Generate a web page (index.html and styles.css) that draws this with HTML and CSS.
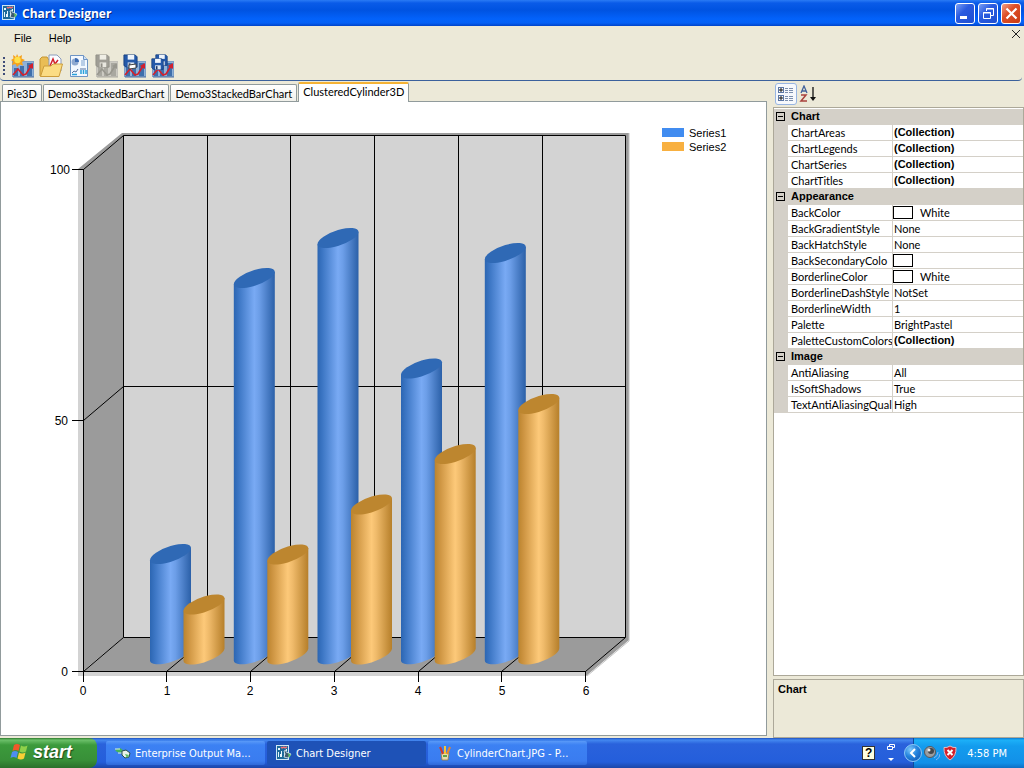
FILE: index.html
```html
<!DOCTYPE html>
<html lang="en">
<head>
    <meta charset="UTF-8">
    <meta name="viewport" content="width=device-width, initial-scale=1.0">
    <title>Chart Designer</title>
    <link rel="stylesheet" href="styles.css">
</head>
<body>
    <!-- shared icon shapes -->
    <svg class="defs" width="0" height="0" aria-hidden="true">
        <defs>
            <symbol id="app" viewBox="0 0 16 16">
                <rect x="0.5" y="0.5" width="12" height="14" fill="#1d6a9a" stroke="#cfe6f5"/>
                <path d="M2 3h2v2H2zM2 7h1v5H2zM5 6h1v6H5zM8 8h1v4H8zM4 9h1v3H4zM10 4h1v2h-1z" fill="#e8f6ff"/>
                <path d="M5 2l1 1 2-1 1 1 2-1" fill="none" stroke="#f07078" stroke-width="1.4"/>
                <path d="M8 6l2-1v2l5 2-3 4-4-1 1-3z" fill="#3c5a70" stroke="#dfeef5" stroke-width="0.8"/>
                <path d="M12 8l3 2-2 3" fill="#5ec46a"/>
            </symbol>
            <symbol id="chart" viewBox="0 0 24 24">
                <rect x="1.5" y="7.5" width="21" height="15" fill="#8fb1d8" stroke="#7d9fc8"/>
                <path d="M3 22V14h4v8zM9 22V12h4v10zM16 22V9h5v13z" fill="#3f6fab"/>
                <path d="M2 23h21" stroke="#4a6fa3"/>
                <path d="M2 21l5-6 5 6 3-1 5-8" fill="none" stroke="#d3202c" stroke-width="1.6"/>
                <path d="M17 12l5-3 0 6z" fill="#d3202c"/>
            </symbol>
            <symbol id="disk" viewBox="0 0 16 16">
                <path d="M1 1h12l2 2v11H3l-2-2z" fill="#2459a9" stroke="#17407f"/>
                <path d="M5 1h7v5H5z" fill="#eef4fb"/>
                <path d="M5 9h7v5H5z" fill="#dfe7f0"/>
                <path d="M6 10h2v4H6z" fill="#1b3766"/>
            </symbol>
            <linearGradient id="blue">
                <stop offset="0" stop-color="#2c66b2"/>
                <stop offset="0.12" stop-color="#3c76c4"/>
                <stop offset="0.5" stop-color="#79aaf4"/>
                <stop offset="0.62" stop-color="#6c9ee8"/>
                <stop offset="1" stop-color="#2b60a8"/>
            </linearGradient>
            <linearGradient id="gold">
                <stop offset="0" stop-color="#bb842e"/>
                <stop offset="0.12" stop-color="#cc9340"/>
                <stop offset="0.5" stop-color="#fdc979"/>
                <stop offset="0.62" stop-color="#efba6a"/>
                <stop offset="1" stop-color="#b67f2a"/>
            </linearGradient>
            <radialGradient id="bubble" cx="0.35" cy="0.3" r="0.8">
                <stop offset="0" stop-color="#7fc8fb"/>
                <stop offset="0.5" stop-color="#2484de"/>
                <stop offset="1" stop-color="#1259b5"/>
            </radialGradient>
        </defs>
    </svg>

    <header class="titlebar">
        <svg class="icon16"><use href="#app"/></svg>
        <h1>Chart Designer</h1>
        <button class="caption" aria-label="Minimize">
            <svg width="19" height="19"><rect x="4" y="12" width="7" height="3" fill="#fff"/></svg>
        </button>
        <button class="caption" aria-label="Restore">
            <svg width="19" height="19" fill="none" stroke="#fff"><path d="M7.5 7V4.500H14.500V11.500H12M7 5h8"/><path d="M4.500 8.500H11.500V14.500H4.500zM4 9h8"/></svg>
        </button>
        <button class="caption close" aria-label="Close">
            <svg width="19" height="19"><path d="M4.500 4.500l10 10M14.500 4.500l-10 10" stroke="#fff" stroke-width="2.200"/></svg>
        </button>
    </header>

    <nav class="menubar">
        <button>File</button>
        <button>Help</button>
        <button class="mdi-close" aria-label="Close document">
            <svg width="10" height="10"><path d="M1 1l8 8M9 1l-8 8" stroke="#222"/></svg>
        </button>
    </nav>

    <div class="toolbar">
        <span class="grip"></span>
        <button aria-label="New chart">
            <svg width="24" height="24" viewBox="0 0 24 24">
                <use href="#chart"/>
                <path d="M6 0l1.500 3L11 1l-.5 3.500L14 6l-3 2 1 3.500-3.500-1L6 13l-1.500-3L1 11l1-3.500L0 6l2.500-1.500L2 1l3 2z" fill="#f6a21c"/>
                <circle cx="6.500" cy="6" r="3.200" fill="#ffe14a"/>
            </svg>
        </button>
        <button aria-label="Open">
            <svg width="24" height="24" viewBox="0 0 24 24">
                <path d="M1 22V5l2-2h5l2 3h9v16z" fill="#e9bd55" stroke="#c59532"/>
                <path d="M10 1h8l4 4v12H10z" fill="#fbfcff" stroke="#8c9cbc"/>
                <path d="M11 12l3-7 2 5 3-4" fill="none" stroke="#d3202c" stroke-width="1.500"/>
                <path d="M1.500 22.500L5 12h7l2-2h9.500L20 22.500z" fill="#fbdc83" stroke="#cc9d3b"/>
            </svg>
        </button>
        <button aria-label="Page preview">
            <svg width="24" height="24" viewBox="0 0 24 24">
                <path d="M3.500 1.500h13l4 4v17h-17z" fill="#f3f8fe" stroke="#6d94c4"/>
                <path d="M16.500 1.500v4h4" fill="#cfe0f3" stroke="#6d94c4"/>
                <circle cx="8" cy="8" r="3.500" fill="#8ea9d0"/>
                <path d="M8 8V4a4 4 0 0 1 4 4z" fill="#3d6db4"/>
                <path d="M14 7h4M14 9h4M14 11h4" stroke="#7fa3cf"/>
                <path d="M5 19l2-2 2 1 2-3M13 15h6" fill="none" stroke="#54719f"/>
                <path d="M14 16v4M16.500 16v4M19 16v4M5 20.500h5" stroke="#29a1dc" stroke-width="1.500"/>
            </svg>
        </button>
        <button aria-label="Save" disabled>
            <svg class="grey" width="24" height="24" viewBox="0 0 24 24">
                <use href="#chart"/>
                <use href="#disk" width="15" height="15"/>
            </svg>
        </button>
        <button aria-label="Save as">
            <svg width="24" height="24" viewBox="0 0 24 24">
                <use href="#chart"/>
                <use href="#disk" width="15" height="15"/>
                <path d="M6 11l7-1v4l-7 1z" fill="#fff" stroke="#444"/>
            </svg>
        </button>
        <button aria-label="Save all">
            <svg width="24" height="24" viewBox="0 0 24 24">
                <use href="#chart"/>
                <use href="#disk" x="4" width="13" height="13"/>
                <use href="#disk" y="4" width="13" height="13"/>
            </svg>
        </button>
    </div>

    <main class="workspace">
        <section class="document">
            <div class="tabs" role="tablist">
                <button role="tab">Pie3D</button>
                <button role="tab">Demo3StackedBarChart</button>
                <button role="tab">Demo3StackedBarChart</button>
                <button role="tab" class="active" aria-selected="true">ClusteredCylinder3D</button>
            </div>
            <div class="canvas">
                <svg class="plot" width="740" height="620" viewBox="1 102 740 620" role="img" aria-label="Clustered cylinder chart">
                    <!-- walls -->
                    <path d="M78 169h6v502h502v5H78z" fill="#d3d3d3"/>
                    <path d="M78 169L122 133H629V640L586 676V671L625 637V136H124L84 170z" fill="#9b9b9b"/>
                    <path d="M629 133v508l-42 35" fill="none" stroke="#c4c4c4"/>
                    <path d="M123 135H626V638H123z" fill="#d3d3d3"/>
                    <path d="M83 169L123 135V638L83 671z" fill="#9b9b9b"/>
                    <path d="M123 638H626L586 671H83z" fill="#9b9b9b"/>
                    <!-- grid -->
                    <g class="grid">
                        <path d="M83.500 169.500L123.500 135.500H625.500V637.500H123.500V135.500"/>
                        <path d="M207.500 135V637M290.500 135V637M374.500 135V637M458.500 135V637M542.500 135V637"/>
                        <path d="M83.500 420.500L123.500 386.500H625.500"/>
                        <path d="M83.500 671.500L123.500 637.500M166.500 671.500L207.500 637.500M250.500 671.500L290.500 637.500M334.500 671.500L374.500 637.500M418.500 671.500L458.500 637.500M501.500 671.500L542.500 637.500M585.500 671.500L625.500 637.500"/>
                        <path d="M83.500 169V682M72 671.500H586M72 169.500H84M72 420.500H84"/>
                        <path d="M166.500 671V682M250.500 671V682M334.500 671V682M418.500 671V682M501.500 671V682M585.500 671V682"/>
                    </g>
                    <!-- cylinders, one pair per category -->
                    <g class="s1" transform="matrix(1 -.3 0 1 170.500 554)"><path d="M-20.500 0V100.300A20.500 7.900 0 0 0 20.500 100.300V0z"/><ellipse rx="20.500" ry="7.900"/></g>
                    <g class="s2" transform="matrix(1 -.3 0 1 204 604.500)"><path d="M-20.500 0V50A20.500 7.900 0 0 0 20.500 50V0z"/><ellipse rx="20.500" ry="7.900"/></g>
                    <g class="s1" transform="matrix(1 -.3 0 1 254.300 278)"><path d="M-20.500 0V376.300A20.500 7.900 0 0 0 20.500 376.300V0z"/><ellipse rx="20.500" ry="7.900"/></g>
                    <g class="s2" transform="matrix(1 -.3 0 1 287.800 554.500)"><path d="M-20.500 0V100A20.500 7.900 0 0 0 20.500 100V0z"/><ellipse rx="20.500" ry="7.900"/></g>
                    <g class="s1" transform="matrix(1 -.3 0 1 338 238)"><path d="M-20.500 0V416.300A20.500 7.900 0 0 0 20.500 416.300V0z"/><ellipse rx="20.500" ry="7.900"/></g>
                    <g class="s2" transform="matrix(1 -.3 0 1 371.500 504.500)"><path d="M-20.500 0V150A20.500 7.900 0 0 0 20.500 150V0z"/><ellipse rx="20.500" ry="7.900"/></g>
                    <g class="s1" transform="matrix(1 -.3 0 1 421.500 368.500)"><path d="M-20.500 0V285.800A20.500 7.900 0 0 0 20.500 285.800V0z"/><ellipse rx="20.500" ry="7.900"/></g>
                    <g class="s2" transform="matrix(1 -.3 0 1 455.200 454)"><path d="M-20.500 0V200.500A20.500 7.900 0 0 0 20.500 200.500V0z"/><ellipse rx="20.500" ry="7.900"/></g>
                    <g class="s1" transform="matrix(1 -.3 0 1 505.300 253)"><path d="M-20.500 0V401.300A20.500 7.900 0 0 0 20.500 401.300V0z"/><ellipse rx="20.500" ry="7.900"/></g>
                    <g class="s2" transform="matrix(1 -.3 0 1 538.800 404)"><path d="M-20.500 0V250.500A20.500 7.900 0 0 0 20.500 250.500V0z"/><ellipse rx="20.500" ry="7.900"/></g>
                    <g class="axis end">
                        <text x="70" y="174">100</text>
                        <text x="68" y="425">50</text>
                        <text x="68" y="676">0</text>
                    </g>
                    <g class="axis mid">
                        <text x="83" y="695">0</text>
                        <text x="167" y="695">1</text>
                        <text x="250" y="695">2</text>
                        <text x="334" y="695">3</text>
                        <text x="418" y="695">4</text>
                        <text x="502" y="695">5</text>
                        <text x="586" y="695">6</text>
                    </g>
                    <rect x="662" y="128" width="22" height="9" fill="#418cf0"/>
                    <rect x="662" y="142" width="22" height="9" fill="#f8b040"/>
                    <text class="legend" x="689" y="137">Series1</text>
                    <text class="legend" x="689" y="151">Series2</text>
                </svg>
            </div>
        </section>

        <aside class="properties">
            <div class="prop-tools">
                <button class="pressed" aria-label="Categorized">
                    <svg width="18" height="18" viewBox="0 0 18 18">
                        <g fill="#fff" stroke="#5c77a5"><rect x="1.500" y="2.500" width="5" height="5"/><rect x="1.500" y="10.500" width="5" height="5"/></g>
                        <path d="M2 5h4M4 3v4M2 13h4M4 11v4" stroke="#111"/>
                        <path d="M8 3.500h3M12 3.500h4M8 5.500h3M12 5.500h4M8 7.500h3M12 7.500h4M8 11.500h3M12 11.500h4M8 13.500h3M12 13.500h4M8 15.500h3M12 15.500h4" stroke="#7c8fae"/>
                    </svg>
                </button>
                <button aria-label="Alphabetical">
                    <svg width="18" height="18" viewBox="0 0 18 18" fill="none">
                        <path d="M2 8l3-7 3 7M3 6h4" stroke="#41619b" stroke-width="1.300"/>
                        <path d="M2 10h5l-5 6h6" stroke="#a8413d" stroke-width="1.500"/>
                        <path d="M14 2v12" stroke="#111" stroke-width="1.300"/>
                        <path d="M11 12h6l-3 4z" fill="#111"/>
                    </svg>
                </button>
            </div>
            <div class="prop-grid">
                <table>
                    <colgroup><col class="margin"><col class="name"><col></colgroup>
                    <tbody>
                        <tr class="category"><td><button aria-label="Collapse Chart"></button></td><th colspan="2">Chart</th></tr>
                        <tr><td></td><th>ChartAreas</th><td><b>(Collection)</b></td></tr>
                        <tr><td></td><th>ChartLegends</th><td><b>(Collection)</b></td></tr>
                        <tr><td></td><th>ChartSeries</th><td><b>(Collection)</b></td></tr>
                        <tr><td></td><th>ChartTitles</th><td><b>(Collection)</b></td></tr>
                    </tbody>
                    <tbody>
                        <tr class="category"><td><button aria-label="Collapse Appearance"></button></td><th colspan="2">Appearance</th></tr>
                        <tr><td></td><th>BackColor</th><td class="color"><i class="swatch"></i>White</td></tr>
                        <tr><td></td><th>BackGradientStyle</th><td>None</td></tr>
                        <tr><td></td><th>BackHatchStyle</th><td>None</td></tr>
                        <tr><td></td><th>BackSecondaryColo</th><td class="color"><i class="swatch"></i></td></tr>
                        <tr><td></td><th>BorderlineColor</th><td class="color"><i class="swatch"></i>White</td></tr>
                        <tr><td></td><th>BorderlineDashStyle</th><td>NotSet</td></tr>
                        <tr><td></td><th>BorderlineWidth</th><td>1</td></tr>
                        <tr><td></td><th>Palette</th><td>BrightPastel</td></tr>
                        <tr><td></td><th>PaletteCustomColors</th><td><b>(Collection)</b></td></tr>
                    </tbody>
                    <tbody>
                        <tr class="category"><td><button aria-label="Collapse Image"></button></td><th colspan="2">Image</th></tr>
                        <tr><td></td><th>AntiAliasing</th><td>All</td></tr>
                        <tr><td></td><th>IsSoftShadows</th><td>True</td></tr>
                        <tr><td></td><th>TextAntiAliasingQual</th><td>High</td></tr>
                    </tbody>
                </table>
            </div>
            <div class="prop-help">Chart</div>
        </aside>
    </main>

    <footer class="taskbar">
        <button class="start">
            <svg width="20" height="20" viewBox="0 0 20 20">
                <path d="M4 3q3-2 6 0L8.500 9q-3-2-6 0z" fill="#f0582a"/>
                <path d="M11 3.500q3 2 6.500 0L16 9.500q-3 2-6.500 0z" fill="#8fd04a"/>
                <path d="M2 10q3-2 6 0L6.500 16q-3-2-6 0z" fill="#4f8df0"/>
                <path d="M9 10.500q3 2 6.500 0L14 16.500q-3 2-6.500 0z" fill="#fbcf35"/>
            </svg>
            start
        </button>
        <div class="tasks">
            <button>
                <svg class="icon16" viewBox="0 0 16 16">
                    <path d="M0 5l5-2 3 2-2 3-4-1z" fill="#46b45a"/>
                    <path d="M0 4h5M3 8h4" stroke="#d9f2e0"/>
                    <path d="M7 6l4-1 4 3-1 4-4 1-3-3z" fill="#e8f2ea" stroke="#2b4f4a"/>
                    <path d="M10 9l4 1-2 3z" fill="#58bd64"/>
                </svg>
                Enterprise Output Ma...
            </button>
            <button class="current">
                <svg class="icon16"><use href="#app"/></svg>
                Chart Designer
            </button>
            <button>
                <svg class="icon16" viewBox="0 0 16 16">
                    <path d="M4 8h8l-1 7H5z" fill="#e8dcae" stroke="#9c7f3c" stroke-width="0.8"/>
                    <path d="M6 9L3 2" stroke="#d23c2a" stroke-width="2"/>
                    <path d="M8 9V1" stroke="#f3c53a" stroke-width="2"/>
                    <path d="M10 9l3-7" stroke="#e88a2c" stroke-width="2"/>
                    <path d="M6 11h4" stroke="#5fa348" stroke-width="2"/>
                </svg>
                CylinderChart.JPG - P...
            </button>
        </div>
        <button class="langhelp" aria-label="Help">?</button>
        <button class="langbar" aria-label="Language bar options">
            <svg width="10" height="20" fill="none" stroke="#fff"><path d="M3.500 3V1.500H8.500V4.500H7M1.500 3.500H6.500V6.500H1.500z"/><path d="M2 15h6l-3 3z" fill="#fff" stroke="none"/></svg>
        </button>
        <div class="tray">
            <button class="expand" aria-label="Show hidden icons">
                <svg width="18" height="18"><circle cx="9" cy="9" r="8.500" fill="url(#bubble)" stroke="#8cc6f5"/><path d="M11 5L7 9l4 4" fill="none" stroke="#fff" stroke-width="2"/></svg>
            </button>
            <svg class="icon16" viewBox="0 0 16 16">
                <circle cx="6" cy="7" r="5.500" fill="#9b9da0" stroke="#55585c"/>
                <circle cx="7" cy="6" r="3" fill="#44474b"/>
                <circle cx="5" cy="5" r="1.500" fill="#eee"/>
                <path d="M10 13q4-2 4-6M12 15q4-2 4-6" fill="none" stroke="#8ab4f0"/>
            </svg>
            <svg class="icon16" viewBox="0 0 16 16">
                <path d="M8 1q3 2 6 1.500Q14.500 11 8 15 1.500 11 2 2.500 5 3 8 1z" fill="#d41f2a" stroke="#e9b9bd"/>
                <path d="M5.500 5l5 5M10.500 5l-5 5" stroke="#fff" stroke-width="2"/>
            </svg>
            <time>4:58 PM</time>
        </div>
    </footer>
</body>
</html>
```

FILE: styles.css
```css
* {
    box-sizing: border-box;
}
body {
    font-family: "Liberation Sans", Arial, sans-serif;
    font-size: 11px;
    color: #000;
    background-color: #ece9d8;
    margin: 0;
    display: flex;
    flex-direction: column;
    height: 100vh;
    overflow: hidden;
}
button {
    font: inherit;
    color: inherit;
    background: none;
    border: none;
    margin: 0;
    padding: 0;
}
svg {
    display: block;
    flex: none;
}
.defs {
    position: absolute;
}
.icon16 {
    width: 16px;
    height: 16px;
}

/* title bar */
.titlebar {
    display: flex;
    align-items: center;
    gap: 3px;
    height: 26px;
    flex: none;
    padding: 0 3px 0 2px;
    background: linear-gradient(#2a7bf5 0, #0a5be8 3px, #0053e1 10px, #0362fb 19px, #0560f5 23px, #0043c8 26px);
}
.titlebar h1 {
    flex: 1;
    margin: 0 0 0 1px;
    font-family: "Open Sans", sans-serif;
    font-size: 12px;
    color: #fff;
    text-shadow: 1px 1px #0a2a80;
}
.caption {
    width: 20px;
    height: 21px;
    border: 1px solid #fff;
    border-radius: 3px;
    background: linear-gradient(135deg, #7a9ff5, #2a5be0 40%, #1f4fd0);
}
.caption.close {
    background: linear-gradient(135deg, #f0a088, #de4f28 40%, #c93c14);
}

/* menu */
.menubar {
    display: flex;
    align-items: center;
    gap: 17px;
    height: 25px;
    flex: none;
    padding: 0 3px 2px 14px;
}
.mdi-close {
    margin-left: auto;
    align-self: flex-start;
    padding-top: 3px;
}

/* toolbar */
.toolbar {
    display: flex;
    align-items: center;
    gap: 4px;
    height: 30px;
    flex: none;
    margin-right: 2px;
    padding-left: 3px;
    border-bottom: 1px solid #3b619c;
    border-radius: 0 0 4px 4px;
}
.grip {
    width: 2px;
    height: 18px;
    margin-right: 2px;
    background: repeating-linear-gradient(#3f4c78 0 2px, transparent 2px 4px);
}
.grey {
    filter: grayscale(1);
    opacity: 0.5;
}

/* workspace */
.workspace {
    display: grid;
    grid-template-columns: minmax(0, 1fr) 251px;
    gap: 6px;
    flex: 1;
    min-height: 0;
}
.document {
    display: flex;
    flex-direction: column;
    min-height: 0;
    padding-bottom: 2px;
}
.tabs {
    display: flex;
    align-items: flex-end;
    gap: 1px;
    height: 20px;
    flex: none;
    padding-left: 2px;
}
.tabs button {
    height: 17px;
    padding: 0 4px;
    border: 1px solid #919b9c;
    border-bottom: none;
    border-radius: 2px 2px 0 0;
    background: linear-gradient(#fff, #f0f0ea);
    font-family: Lato, sans-serif;
    font-variant-ligatures: none;
}
/* overlaps the top border of the page below */
.tabs .active {
    position: relative;
    height: 20px;
    margin-bottom: -1px;
    padding: 0 4px 3px;
    border-top: 2px solid #f5b335;
    background: #fff;
}
.canvas {
    flex: 1;
    min-height: 0;
    overflow: hidden;
    border: 1px solid #919b9c;
    background: #fff;
}

/* chart */
.grid {
    fill: none;
    stroke: #000;
}
.s1 path {
    fill: url(#blue);
}
.s1 ellipse {
    fill: #2f69b5;
}
.s2 path {
    fill: url(#gold);
}
.s2 ellipse {
    fill: #bd862f;
}
.axis {
    font-size: 12px;
}
.end {
    text-anchor: end;
}
.mid {
    text-anchor: middle;
}
.legend {
    font-size: 11px;
}

/* property grid */
.properties {
    display: flex;
    flex-direction: column;
    min-height: 0;
}
.prop-tools {
    display: flex;
    align-items: center;
    height: 26px;
    flex: none;
    padding-left: 2px;
}
.prop-tools button {
    padding: 1px;
    border: 1px solid transparent;
}
.prop-tools .pressed {
    border-color: #98b5e2;
    border-radius: 3px;
    background: #f6f8fc;
}
.prop-grid {
    flex: 1;
    min-height: 0;
    overflow: hidden;
    padding-top: 1px;
    border: 1px solid #aca899;
    background: #fff;
}
.prop-grid table {
    width: 100%;
    table-layout: fixed;
    border-collapse: separate;
    border-spacing: 0;
    font-family: Lato, sans-serif;
}
.margin {
    width: 14px;
}
.name {
    width: 105px;
}
.prop-grid td,
.prop-grid th {
    height: 16px;
    padding: 0 0 0 1px;
    line-height: 15px;
    font-weight: normal;
    text-align: left;
    vertical-align: top;
    white-space: nowrap;
    overflow: hidden;
    border-bottom: 1px solid #d4d0c8;
}
.prop-grid th {
    padding-left: 3px;
    border-right: 1px solid #d4d0c8;
}
.prop-grid td:first-child {
    padding: 3px 0 0 2px;
    background: #d4d0c8;
}
.prop-grid .category th {
    font-weight: bold;
    background: #d4d0c8;
}
.prop-grid b,
.prop-grid .category th {
    display: block;
    font-family: "Liberation Sans", Arial, sans-serif;
}
.prop-grid .category th {
    display: table-cell;
}
.category button {
    display: block;
    width: 9px;
    height: 9px;
    border: 1px solid #000;
    background: linear-gradient(#000, #000) center / 5px 1px no-repeat;
}
.prop-grid .color {
    padding-left: 0;
}
.swatch {
    display: inline-block;
    width: 20px;
    height: 13px;
    margin: 1px 7px 0 0;
    border: 1px solid #000;
    background: #fff;
    vertical-align: top;
}
.prop-help {
    height: 59px;
    flex: none;
    margin-top: 3px;
    padding: 3px 4px;
    border: 1px solid #aca899;
    font-weight: bold;
}

/* taskbar */
.taskbar {
    display: flex;
    align-items: center;
    height: 30px;
    flex: none;
    color: #fff;
    font-family: "DejaVu Sans Condensed", "DejaVu Sans", sans-serif;
    background: linear-gradient(#1f52c0 0, #4488f0 2px, #2a62dc 6px, #245edb 24px, #1c46a8 30px);
}
.start {
    display: flex;
    align-items: center;
    gap: 3px;
    width: 97px;
    height: 30px;
    padding: 0 0 2px 10px;
    border-radius: 0 8px 8px 0;
    font: italic bold 18px "Liberation Sans", sans-serif;
    text-shadow: 1px 1px 1px #1c4a1c;
    background: linear-gradient(#2c7a2c 0, #6cc06a 2px, #3c9a3c 7px, #389038 22px, #2a702a 30px);
}
.tasks {
    display: flex;
    flex: 1;
    gap: 2px;
    padding-left: 9px;
}
.tasks button {
    display: flex;
    align-items: center;
    gap: 4px;
    width: 159px;
    height: 24px;
    padding: 0 9px;
    border-radius: 2px;
    white-space: nowrap;
    background: linear-gradient(#5a9af8, #3c81f3 4px, #3a7cf0 20px, #2f69d8);
}
.tasks .current {
    background: #1e52b7;
}
.langhelp {
    width: 13px;
    height: 14px;
    font: bold 12px/12px "Liberation Sans", sans-serif;
    color: #000;
    border: 1px solid #333;
    background: #ffffe1;
}
.langbar {
    margin: 0 17px 0 11px;
}
.tray {
    display: flex;
    align-items: center;
    gap: 2px;
    height: 30px;
    padding-right: 17px;
    border-left: 1px solid #104a9a;
    background: linear-gradient(#0c78d0 0, #1cb0f8 2px, #139cee 8px, #1290e8 25px, #0e6fc4 30px);
}
.expand {
    margin-left: -10px;
}
.tray time {
    margin-left: 7px;
}
```
